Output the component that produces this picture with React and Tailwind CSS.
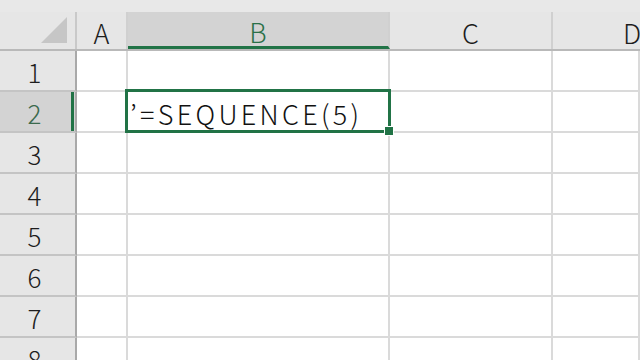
import React from "react";

const cols = [
  { key: "A", w: "w-[51px]" },
  { key: "B", w: "w-[262px]" },
  { key: "C", w: "w-[163px]" },
  { key: "D", w: "flex-1" },
];

const rows = [1, 2, 3, 4, 5, 6, 7, 8];

function CornerCell() {
  return (
    <div className="w-[77px] shrink-0 h-full border-r-2 border-[#c9c9c9] flex items-end justify-end pr-[8px] pb-[6px]">
      <svg width="26" height="26" viewBox="0 0 26 26">
        <polygon points="26,0 26,26 0,26" fill="#c6c6c6" />
      </svg>
    </div>
  );
}

function HeaderCell({ col }) {
  const selected = col.key === "B";
  return (
    <div
      className={
        "shrink-0 h-full flex items-center justify-center border-r-2 border-[#d0d0d0] " +
        col.w +
        (selected ? " bg-[#d3d3d3] text-[#2a7048] border-b-[3px] border-b-[#217346] pt-[5px]" : " text-[#1d1d1d] pt-[4px]") +
        (col.key === "D" ? " justify-start pl-[70px]" : "")
      }
    >
      <span className="text-[27px] leading-none font-light">{col.key}</span>
    </div>
  );
}

function Row({ n }) {
  const active = n === 2;
  return (
    <div className="flex h-[41px] shrink-0">
      <div
        className={
          "w-[77px] shrink-0 flex items-center justify-center border-b-2 border-[#c4c4c4] border-r-2 border-r-[#a9a9a9] relative " +
          (active ? "bg-[#d3d3d3] text-[#3b6a4d]" : "bg-[#e6e6e6] text-[#1d1d1d]")
        }
      >
        <span className="text-[26px] leading-none font-light pt-[3px] pr-[6px]">{n}</span>
        {active && <div className="absolute right-[1px] top-0 bottom-0 w-[3px] bg-[#217346]" />}
      </div>
      {cols.map((c) => (
        <div
          key={c.key}
          className={"shrink-0 border-b-2 border-r-2 border-[#dadada] bg-white relative " + c.w}
        >
          {active && c.key === "B" && (
            <div className="absolute -left-[3px] -top-[3px] w-[266px] h-[44px] border-[3px] border-[#217346] z-10 flex items-center pl-[2px] pt-[4px]">
              <span className="text-[27px] leading-none font-light tracking-[3.3px] text-[#111] whitespace-nowrap">
                ’=SEQUENCE(5)
              </span>
              <div className="absolute -right-[6px] -bottom-[6px] w-[10px] h-[10px] bg-[#217346] border border-white z-20" />
            </div>
          )}
        </div>
      ))}
    </div>
  );
}

export default function App() {
  return (
    <div
      className="w-[640px] h-[360px] overflow-hidden bg-white flex flex-col"
      style={{ fontFamily: '"Noto Sans CJK JP", "Noto Sans", sans-serif' }}
    >
      <div className="h-[12px] shrink-0 bg-[#e8e8e8]" />
      <div className="flex h-[39px] shrink-0 bg-[#e6e6e6] border-b-2 border-[#b9b9b9]">
        <CornerCell />
        {cols.map((c) => (
          <HeaderCell key={c.key} col={c} />
        ))}
      </div>
      {rows.map((n) => (
        <Row key={n} n={n} />
      ))}
    </div>
  );
}
